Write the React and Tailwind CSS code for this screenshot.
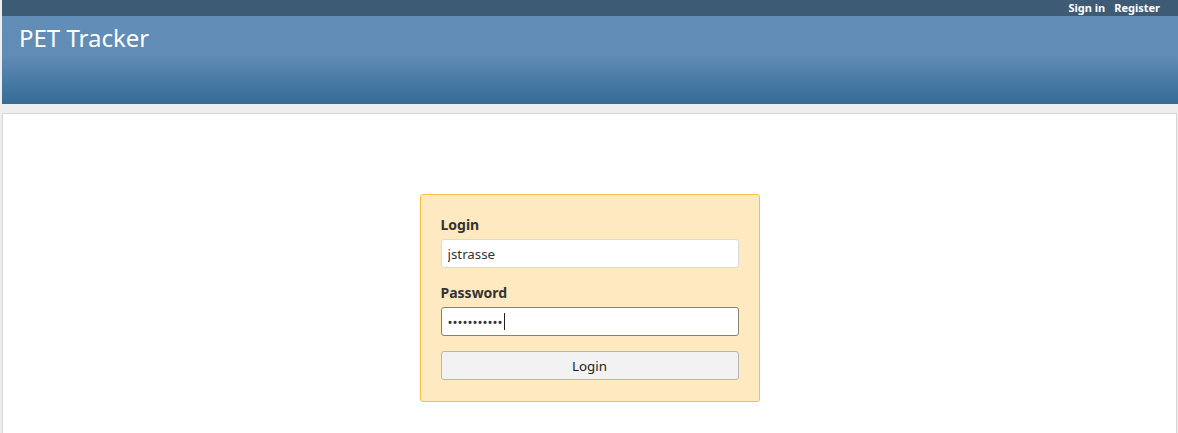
import React from "react";

const font = { fontFamily: '"Noto Sans", "Open Sans", sans-serif' };

function TopMenu() {
  return (
    <div className="h-4 bg-[#3e5b76] flex items-center justify-end pr-[18px] gap-[9px] text-[11px] font-bold leading-4 text-white">
      <a href="#" className="text-white">Sign in</a>
      <a href="#" className="text-white">Register</a>
    </div>
  );
}

function Header() {
  return (
    <div className="h-[88px] bg-[linear-gradient(to_bottom,#628db6_0%,#608cb5_45%,#346b95_100%)] pl-[17px] pt-[6px]">
      <h1 className="text-[24px] leading-[32px] text-white font-normal">PET Tracker</h1>
    </div>
  );
}

function LoginBox() {
  return (
    <div className="w-[340px] bg-[#ffe9c0] border border-[#fbbd45] rounded-[3px] px-[20px] pt-[20px] pb-[21px] flex flex-col">
      <label className="text-[14px] leading-[20px] font-bold text-[#333] mb-[4px]">Login</label>
      <input
        type="text"
        defaultValue="jstrasse"
        className="h-[29px] w-[298px] bg-white border border-[#d9d9d9] rounded-[3px] px-[6px] text-[13.33px] text-[#333] outline-none"
      />
      <label className="text-[14px] leading-[20px] font-bold text-[#333] mt-[15px] mb-[4px]">Password</label>
      <div className="relative">
        <input
          type="password"
          defaultValue="abcdefghijk"
          className="h-[29px] w-[298px] bg-white border border-[#85846b] rounded-[3px] px-[6px] text-[13.33px] text-[#333] outline-none"
        />
        <span className="absolute left-[63px] top-[6px] h-[17px] w-px bg-[#222]" />
      </div>
      <button className="mt-[15px] h-[29px] w-[298px] bg-[#f2f2f2] border border-[#b5b5b5] rounded-[3px] text-[13.33px] leading-[20px] pt-px flex items-center justify-center text-[#222]">
        Login
      </button>
    </div>
  );
}

export default function App() {
  return (
    <div className="min-h-screen bg-[#eeeeee] overflow-hidden" style={font}>
      <div className="ml-[2px]">
        <TopMenu />
        <Header />
        <div className="h-[9px]" />
        <div className="mr-px bg-white border border-[#d7d7d7] min-h-[340px] pt-[80px] flex justify-center items-start">
          <LoginBox />
        </div>
      </div>
    </div>
  );
}
